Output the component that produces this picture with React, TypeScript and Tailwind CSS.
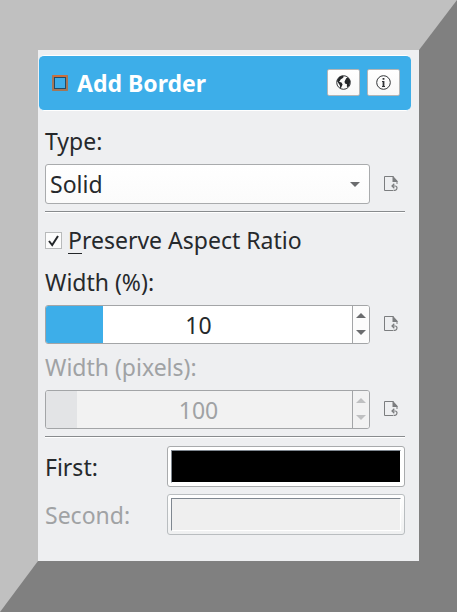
import React from "react";

const label = "flex items-center whitespace-pre text-[23px] leading-8";

function ResetIcon() {
  return (
    <svg className="mb-px ml-[14px] h-4 w-4 shrink-0" viewBox="0 0 16 16" fill="none" stroke="#7b7d7f">
      <path d="M9 14.5H0.5V0.5H9.5" />
      <path d="M8.5 0L13 5V8" />
      <path d="M8.5 0L13.5 5V6H8.5Z" fill="#7b7d7f" stroke="none" />
      <path d="M8 10H11Q13 10 13 12T11 14.3H9.5M10.3 7.8L8 10L10.3 12.2" strokeWidth="1.2" />
    </svg>
  );
}

function Separator() {
  return <div className="h-[2px] w-[360px] border-b border-b-white bg-[#888b8e]" />;
}

function Arrow({ up = false, color }: { up?: boolean; color: string }) {
  return (
    <svg className="h-[5px] w-[10px]" viewBox="0 0 10 5" fill={color}>
      <path d={up ? "M0 5L5 0L10 5Z" : "M0 0L5 5L10 0Z"} />
    </svg>
  );
}

function SpinSlider({ value, disabled = false }: { value: string; disabled?: boolean }) {
  const arrow = disabled ? "#bfc0c1" : "#6b6c6e";
  return (
    <div className="flex items-center">
      <div className={`flex h-[39px] w-[325px] overflow-hidden rounded-[3px] border border-[#a3a5a7] ${disabled ? "bg-[#f2f2f2] text-[#a0a2a4]" : "bg-white"}`}>
        <div className="relative flex flex-1 items-center justify-center text-[23px]">
          <div className={`absolute inset-y-0 left-0 ${disabled ? "w-[31px] bg-[#e3e4e6]" : "w-[57px] bg-[#3daee9]"}`} />
          <span className="relative pt-px pr-px">{value}</span>
        </div>
        <div className={`flex w-[17px] flex-col items-center justify-between border-l border-[#a3a5a7] pt-[7px] pb-[8px] ${disabled ? "bg-[#f2f2f2]" : "bg-[#fcfcfc]"}`}>
          <Arrow up color={arrow} />
          <Arrow color={arrow} />
        </div>
      </div>
      <ResetIcon />
    </div>
  );
}

function HeaderButton({ children }: { children: React.ReactNode }) {
  return (
    <div className="flex h-[27px] w-[33px] items-center justify-center rounded-[2px] border border-[#b3b5b6] bg-gradient-to-b from-white to-[#f8f8f8] pb-px">
      {children}
    </div>
  );
}

function ColorButton({ disabled = false }: { disabled?: boolean }) {
  return (
    <div className={`h-[41px] w-[238px] rounded-[3px] border bg-gradient-to-b from-white px-[3px] pt-[3px] pb-1 ${disabled ? "border-[#b9bdc0] to-[#eff0f1]" : "border-[#a9abad] to-white"}`}>
      <div className={`h-[33px] w-[230px] border border-t-[#7f8790] border-r-white border-b-white border-l-[#7f8790] ${disabled ? "bg-[#efefef]" : "bg-black"}`} />
    </div>
  );
}

export default function App() {
  return (
    <div className="h-[612px] w-[457px] border-x-[38px] border-t-[50px] border-b-[51px] border-t-[#c0c0c0] border-r-[#808080] border-b-[#808080] border-l-[#c0c0c0] bg-[#eff0f1] font-['Noto_Sans',sans-serif] text-[#26292c]">
      <div className="flex h-[511px] flex-col bg-[#eeeff1] pt-[5px]">
        <div className="ml-px flex h-[56px] w-[372px] items-center rounded-[5px] border-y border-white bg-[#3daee9] pr-[11px] pl-[13px]">
          <svg className="h-4 w-4" viewBox="0 0 16 16" fill="none">
            <rect x="1" y="1" width="14" height="14" stroke="#b07248" strokeWidth="1.8" />
            <path d="M1 1H15" stroke="#d0703a" strokeWidth="1.8" />
            <rect x="2.5" y="2.5" width="11" height="11" stroke="#1f4c68" />
          </svg>
          <h1 className="mb-px ml-[9px] text-[23px] leading-8 font-bold text-white">Add Border</h1>
          <div className="mb-px ml-auto flex gap-[7px]">
            <HeaderButton>
              <svg className="h-[15px] w-[15px]" viewBox="0 0 15 15">
                <circle cx="7.5" cy="7.5" r="6.8" fill="none" stroke="#303336" />
                <path d="M1 6L3 2L6.5 .7L8 1.8L6.2 3.6L4.8 4.2L3.8 6L3 6.8L5.5 7.6L6.6 9.5L5 13L4.2 13.2L3.8 10.2L2.3 8Z M9.3 5L10.4 3L12.2 2.6L14.3 6L13.4 10.5L11.5 12.3L10.8 11.3L11 9.3L9 8.5L8.5 6.8Z" fill="#232629" />
              </svg>
            </HeaderButton>
            <HeaderButton>
              <svg className="h-[15px] w-[15px]" viewBox="0 0 15 15" fill="none" stroke="#303336">
                <circle cx="7.5" cy="7.5" r="6.8" />
                <path d="M7.5 3V4.8M7.5 6V12" strokeWidth="1.8" />
                <path d="M6 6.5H7.5M6 11.5H9" />
              </svg>
            </HeaderButton>
          </div>
        </div>

        <div className="ml-[7px] flex flex-col">
          <div className={`${label} mt-[14px]`}>Type:</div>
          <div className="mt-[7px] flex items-center">
            <div className="flex h-[40px] w-[325px] items-center justify-between rounded-[3px] border border-[#a9abad] bg-gradient-to-b from-white to-[#fbfbfb] pr-[9px] pl-1">
              <span className="pt-px text-[23px]">Solid</span>
              <Arrow color="#6b6c6e" />
            </div>
            <ResetIcon />
          </div>
          <div className="mt-[7px]"><Separator /></div>
          <div className={`${label} mt-[11px]`}>
            <div className="mr-[6px] h-[17px] w-[17px] border border-[#b8babb] bg-[#fcfcfc]">
              <svg className="h-[15px] w-[15px]" viewBox="0 0 15 15" fill="none" stroke="#232629" strokeWidth="2">
                <path d="M3 8L6.2 12L12 3" />
              </svg>
            </div>
            <span className="border-b border-[#232629] leading-[26px]">P</span>reserve Aspect Ratio
          </div>
          <div className={`${label} mt-[10px]`}>Width (%):</div>
          <div className="mt-[7px]"><SpinSlider value="10" /></div>
          <div className={`${label} mt-[7px] text-[#a0a2a4]`}>Width (pixels):</div>
          <div className="mt-[7px]"><SpinSlider value="100" disabled /></div>
          <div className="mt-[7px]"><Separator /></div>
          <div className="mt-[8px] flex w-[360px] items-center justify-between">
            <div className={label}>First:</div>
            <ColorButton />
          </div>
          <div className="mt-[7px] flex w-[360px] items-center justify-between text-[#a0a2a4]">
            <div className={label}>Second:</div>
            <ColorButton disabled />
          </div>
        </div>
      </div>
    </div>
  );
}
